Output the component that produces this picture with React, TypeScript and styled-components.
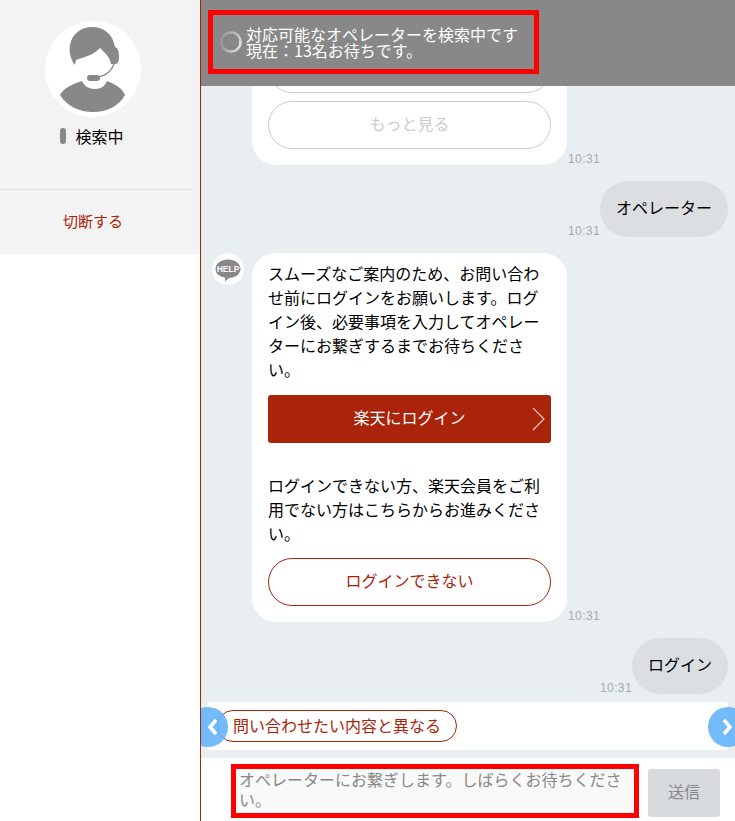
import React from 'react';
import styled, { createGlobalStyle } from 'styled-components';

const GlobalStyle = createGlobalStyle`
	html, body, #root {
		margin: 0;
		padding: 0;
		height: 100%;
	}
	body {
		font-family: "Noto Sans CJK JP", "Liberation Sans", sans-serif;
		font-size: 16px;
		color: #000;
		background: #fff;
		overflow: hidden;
	}
	* {
		box-sizing: border-box;
	}
`;

const Page = styled.div`
	display: flex;
	width: 735px;
	height: 821px;
	overflow: hidden;
`;

const Sidebar = styled.aside`
	width: 200px;
	flex: none;
`;

const SidePanel = styled.div`
	height: 254px;
	background: #f3f3f3;
	padding-top: 21px;
	display: flex;
	flex-direction: column;
	align-items: center;
`;

const Avatar = styled.div`
	width: 96px;
	height: 96px;
	border-radius: 50%;
	background: #fff;
	overflow: hidden;
	margin-right: 14px;
`;

const Status = styled.div`
	display: flex;
	align-items: center;
	gap: 9px;
	height: 24px;
	margin-top: 7px;
	margin-right: 16px;
	line-height: 22px;
`;

const StatusDot = styled.span`
	width: 6px;
	height: 16px;
	border-radius: 3px;
	background: #888;
`;

const Rule = styled.hr`
	width: 193px;
	margin: 41px 7px 0 0;
	border: 0;
	border-top: 1px solid #e2e2e2;
	align-self: flex-start;
`;

const Disconnect = styled.a`
	margin-top: 19px;
	margin-right: 14px;
	font-size: 15px;
	line-height: 24px;
	color: #a9240b;
`;

const Chat = styled.main`
	flex: 1;
	min-width: 0;
	display: flex;
	flex-direction: column;
	border-left: 1px solid #a9240b;
	background: #e9eef1;
`;

const Header = styled.header`
	height: 86px;
	flex: none;
	background: #888;
	padding: 10px 0 0 7px;
	position: relative;
	z-index: 2;
`;

const SearchBox = styled.div`
	width: 331px;
	height: 64px;
	border: 5px solid #f00;
	display: flex;
	align-items: center;
	gap: 4px;
	padding-left: 7px;
	color: #fff;
	line-height: 16px;
`;

const SearchText = styled.div`
	margin-bottom: 1px;
`;

const Spinner = styled.div`
	width: 22px;
	height: 22px;
	flex: none;
	border-radius: 50%;
	background: conic-gradient(from 300deg, #9a9a9a 0deg, #b8b8b8 90deg, #e0e0e0 170deg, #c4c4c4 240deg, #9a9a9a 300deg, #9a9a9a 360deg);
	-webkit-mask: radial-gradient(circle, transparent 8px, #000 8.5px);
	mask: radial-gradient(circle, transparent 8px, #000 8.5px);
`;

const Messages = styled.div`
	flex: 1;
	min-height: 0;
	overflow: hidden;
	display: flex;
	flex-direction: column;
	justify-content: flex-end;
	gap: 16px;
	padding: 0 7px 8px 11px;
`;

const Row = styled.div<{ $mine?: boolean }>`
	display: flex;
	flex: none;
	align-items: flex-end;
	justify-content: ${(props) => (props.$mine ? 'flex-end' : 'flex-start')};
`;

const HelpIcon = styled.div`
	width: 32px;
	height: 32px;
	flex: none;
	align-self: flex-start;
	border-radius: 50%;
	background: #fff;
	margin-right: 8px;
	display: flex;
	align-items: center;
	justify-content: center;
`;

const Spacer = styled.div`
	width: 40px;
	flex: none;
`;

const Bubble = styled.div`
	width: 315px;
	background: #fff;
	border-radius: 24px;
	padding: 8px 16px 16px;
	display: flex;
	flex-direction: column;
	line-height: 24px;
`;

const Time = styled.span`
	font-family: "Liberation Sans", sans-serif;
	font-size: 12px;
	letter-spacing: 0.4px;
	line-height: 11px;
	color: #a3aab0;
	margin-left: 1px;
	width: 33px;
	flex: none;
`;

const MineTime = styled(Time)`
	margin-left: 0;
	width: 32px;
`;

const MineBubble = styled.div`
	height: 56px;
	border-radius: 28px;
	background: #dcdfe2;
	padding: 0 16px;
	line-height: 52px;
`;

const GhostButton = styled.div`
	height: 48px;
	border: 1px solid #ccc;
	border-radius: 24px;
	color: #ccc;
	text-align: center;
	line-height: 43px;
	margin-top: 8px;
`;

const PrimaryButton = styled.div`
	height: 48px;
	border-radius: 3px;
	background: #a9240b;
	color: #fff;
	text-align: center;
	line-height: 44px;
	margin: 14px 0 30px;
	position: relative;
`;

const Chevron = styled.svg`
	position: absolute;
	right: 6px;
	top: 12px;
	width: 13px;
	height: 24px;
`;

const OutlineButton = styled.div`
	height: 48px;
	border: 1px solid #a9240b;
	border-radius: 24px;
	color: #a9240b;
	text-align: center;
	line-height: 42px;
	margin-top: 13px;
`;

const QuickArea = styled.div`
	flex: none;
	padding: 0 7px 8px 6px;
	position: relative;
	overflow: hidden;
`;

const QuickBar = styled.div`
	height: 48px;
	border-radius: 3px;
	background: #fff;
	display: flex;
	align-items: center;
	padding-left: 10px;
`;

const QuickChip = styled.div`
	height: 32px;
	border: 1px solid #a9240b;
	border-radius: 16px;
	padding: 0 15px;
	color: #a9240b;
	line-height: 28px;
`;

const Arrow = styled.div<{ $side: 'left' | 'right' }>`
	position: absolute;
	top: 5px;
	${(props) => (props.$side === 'left' ? 'left: -13px;' : 'right: -13px;')}
	width: 40px;
	height: 40px;
	border-radius: 50%;
	background: rgba(100, 180, 250, 0.9);
	display: flex;
	align-items: center;
	justify-content: center;
	padding: ${(props) => (props.$side === 'left' ? '0 0 0 10px' : '0 2px 0 0')};
`;

const InputBar = styled.div`
	flex: none;
	height: 63px;
	background: #fff;
	display: flex;
	padding: 6px 15px 0 30px;
	gap: 9px;
`;

const InputBox = styled.div`
	width: 408px;
	height: 54px;
	border: 5px solid #f00;
	background: #f9f9f9;
	color: #888;
	padding: 0 3px 5px;
	line-height: 20px;
	display: flex;
	align-items: center;
`;

const SendButton = styled.div`
	width: 72px;
	height: 48px;
	margin-top: 5px;
	border-radius: 3px;
	background: #d8dbde;
	color: #888;
	text-align: center;
	line-height: 44px;
`;

const App = () => {
	return (
		<Page>
			<GlobalStyle />
			<Sidebar>
				<SidePanel>
					<Avatar>
						<svg width="96" height="96" viewBox="0 0 96 96">
							<path fill="#888" d="M15 74 C19 67 27 63 37 60 C39 65 44 68 50 68 C56 68 60 65 62 60 C70 63 77 67 80 74 C74 85 62 91 48 91 C34 91 22 85 15 74 Z" />
							<path fill="#888" d="M30 44 C25 38 24 30 25 24 C27 13 36 6 47 6 C59 6 68 13 70 26 C73 27 74 30 74 36 C74 40 73 42 71 43 L66 43 C65 36 60 32 55 27 C50 33 40 36 31 39 Z" />
							<path fill="none" stroke="#888" strokeWidth="1.4" d="M69 43 C66 51 60 55 53 56" />
							<rect x="42" y="54" width="13" height="6" rx="3" fill="#888" />
						</svg>
					</Avatar>
					<Status>
						<StatusDot />
						<span>検索中</span>
					</Status>
					<Rule />
					<Disconnect>切断する</Disconnect>
				</SidePanel>
			</Sidebar>
			<Chat>
				<Header>
					<SearchBox>
						<Spinner />
						<SearchText>
							対応可能なオペレーターを検索中です
							<br />
							現在：13名お待ちです。
						</SearchText>
					</SearchBox>
				</Header>
				<Messages>
					<Row>
						<Spacer />
						<Bubble>
							<GhostButton />
							<GhostButton>もっと見る</GhostButton>
						</Bubble>
						<Time>10:31</Time>
					</Row>
					<Row $mine>
						<MineTime>10:31</MineTime>
						<MineBubble>オペレーター</MineBubble>
					</Row>
					<Row>
						<HelpIcon>
							<svg width="26" height="26" viewBox="0 0 26 26">
								<path fill="#888" d="M13 3.5 C20 3.5 25.5 7.5 25.5 13 C25.5 18 20 22 14 22 L10 25.5 L10 21.5 C4 20.5 0.5 17.5 0.5 13 C0.5 7.5 6 3.5 13 3.5 Z" />
								<text x="13" y="16" textAnchor="middle" fontSize="8.5" fontWeight="700" fontFamily="Liberation Sans" fill="#fff">HELP</text>
							</svg>
						</HelpIcon>
						<Bubble>
							<div>スムーズなご案内のため、お問い合わせ前にログインをお願いします。ログイン後、必要事項を入力してオペレーターにお繋ぎするまでお待ちください。</div>
							<PrimaryButton>
								楽天にログイン
								<Chevron viewBox="0 0 13 24">
									<path d="M1 1 L12 12 L1 23" fill="none" stroke="#f2c9c0" strokeWidth="1.2" />
								</Chevron>
							</PrimaryButton>
							<div>ログインできない方、楽天会員をご利用でない方はこちらからお進みください。</div>
							<OutlineButton>ログインできない</OutlineButton>
						</Bubble>
						<Time>10:31</Time>
					</Row>
					<Row $mine>
						<MineTime>10:31</MineTime>
						<MineBubble>ログイン</MineBubble>
					</Row>
				</Messages>
				<QuickArea>
					<QuickBar>
						<QuickChip>問い合わせたい内容と異なる</QuickChip>
					</QuickBar>
					<Arrow $side="left">
						<svg width="14" height="18" viewBox="0 0 14 18">
							<path d="M10 2 L4 9 L10 16" fill="none" stroke="#fff" strokeWidth="3.5" />
						</svg>
					</Arrow>
					<Arrow $side="right">
						<svg width="14" height="18" viewBox="0 0 14 18">
							<path d="M4 2 L10 9 L4 16" fill="none" stroke="#fff" strokeWidth="3.5" />
						</svg>
					</Arrow>
				</QuickArea>
				<InputBar>
					<InputBox>オペレーターにお繋ぎします。しばらくお待ちください。</InputBox>
					<SendButton>送信</SendButton>
				</InputBar>
			</Chat>
		</Page>
	);
};

export default App;
